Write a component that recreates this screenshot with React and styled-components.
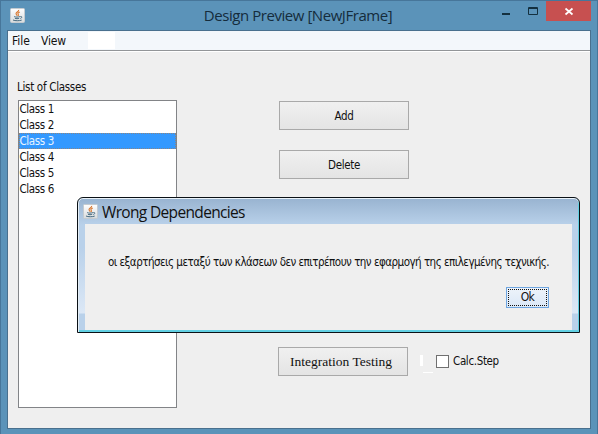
import React from 'react';
import styled, { createGlobalStyle } from 'styled-components';

const GlobalStyle = createGlobalStyle`
  * { box-sizing: border-box; }
  body { margin: 0; background: #5b93b9; overflow: hidden; }
  button { margin: 0; padding: 0; }
`;

const uiFont = "'DejaVu Sans Condensed', 'DejaVu Sans', sans-serif";
const titleFont = "'Open Sans', 'Noto Sans', sans-serif";

const Frame = styled.div`
  position: relative;
  width: 598px;
  height: 434px;
  padding: 0 6px 5px 6px;
  display: flex;
  flex-direction: column;
  background: #5b93b9;
  border: 1px solid #47769a;
  border-bottom: 0;
  font: 11.5px/16px ${uiFont};
  color: #111;
`;

const TitleBar = styled.header`
  flex: 0 0 29px;
  display: grid;
  grid-template-columns: 178px 1fr 182px;
  padding-left: 2px;
`;

const TitleIcon = styled.div`
  padding: 7px 0 0 1px;
  height: 22px;
  line-height: 0;
`;

const Title = styled.h1`
  margin: 0;
  padding: 1px 0 0 0;
  font: 15px/27px ${titleFont};
  letter-spacing: -0.45px;
  color: #152c3c;
  white-space: nowrap;
  text-align: center;
`;

const Controls = styled.div`
  display: flex;
  justify-content: flex-end;
  height: 20px;
`;

const Control = styled.button`
  width: ${(p) => p.$width}px;
  height: 20px;
  border: 0;
  display: flex;
  background: ${(p) => (p.$danger ? '#c75050' : 'transparent')};
`;

const Client = styled.main`
  flex: 1;
  display: flex;
  flex-direction: column;
  min-height: 0;
  border: 1px solid #49708e;
  background: #efefef;
`;

const MenuBar = styled.nav`
  flex: 0 0 20px;
  min-height: 0;
  display: flex;
  background: #f3f7fb;
  border-bottom: 1px solid #929598;
  box-shadow: 0 1px 0 #fff;
  padding: 1px 0 0 4px;
`;

const MenuItem = styled.span`
  width: ${(p) => p.$width}px;
  font: 12px/19px ${uiFont};
  letter-spacing: ${(p) => p.$spacing || 0}px;
`;

const MenuPatch = styled.span`
  width: 27px;
  height: 17px;
  background: #fff;
`;

const Content = styled.div`
  flex: 1;
  display: flex;
  padding: 28px 0 0 10px;
`;

const ListColumn = styled.section`
  width: 260px;
`;

const Label = styled.div`
  height: 21px;
  margin-left: -1px;
  line-height: 17px;
  letter-spacing: -0.3px;
`;

const ListBox = styled.ul`
  list-style: none;
  margin: 0;
  padding: 0;
  width: 159px;
  height: 308px;
  border: 1px solid #828487;
  background: #fff;
`;

const ListItem = styled.li`
  height: 16px;
  padding-left: 0.5px;
  line-height: 17px;
  letter-spacing: -0.38px;
  color: ${(p) => (p.$selected ? '#e8f4ff' : '#111')};
  background: ${(p) => (p.$selected ? '#3399ff' : 'transparent')};
  outline: ${(p) => (p.$selected ? '1px dotted #8a8584' : 'none')};
  outline-offset: -1px;
`;

const Actions = styled.section`
  display: flex;
  flex-direction: column;
  padding-top: 22px;
`;

const Button = styled.button`
  width: 130px;
  height: 29px;
  margin-left: 1px;
  margin-bottom: 20px;
  border: 1px solid #a9a9a9;
  background: linear-gradient(#f0f0f0, #e4e4e4);
  font: 11.5px/26px ${uiFont};
  letter-spacing: -0.35px;
  color: #111;
`;

const BottomRow = styled.div`
  display: flex;
  margin-top: 148px;
`;

const TestingButton = styled(Button)`
  margin-left: 0;
  padding-right: 4px;
  font: 13.5px/27px 'Liberation Serif', serif;
  letter-spacing: 0;
`;

const Marks = styled.svg`
  width: 28px;
  height: 29px;
`;

const CheckLabel = styled.label`
  display: flex;
  gap: 4px;
  height: 13px;
  margin-top: 8px;
  line-height: 13px;
  letter-spacing: -0.35px;
`;

const CheckBox = styled.span`
  width: 13px;
  height: 13px;
  border: 1px solid #707070;
  background: #fff;
`;

const Dialog = styled.div`
  position: absolute;
  left: 76px;
  top: 196px;
  width: 503px;
  height: 136px;
  display: flex;
  flex-direction: column;
  border: 1px solid #0b1116;
  border-radius: 6px 6px 0 0;
  background: linear-gradient(#98b3d0 0, #b9d1ea 27px, #b9d1ea 50px, #dce8f6 115px, #b9d1ea 116px);
  box-shadow: inset 0 1px 0 #eaf3fa, inset 1px 0 0 #e4eef6, inset -1px -2px 0 #62d0e3;
`;

const DialogTitle = styled.header`
  flex: 0 0 26px;
  display: flex;
  align-items: flex-start;
  gap: 4px;
  padding: 6px 0 0 5px;
`;

const DialogName = styled.h2`
  margin: -3px 0 0;
  font: 15.5px/23px ${titleFont};
  letter-spacing: -0.66px;
  color: #111;
`;

const DialogBody = styled.div`
  flex: 1;
  display: flex;
  flex-direction: column;
  align-items: flex-end;
  margin: 0 7px 2px;
  padding: 30px 23px 0 0;
  background: #efefef;
`;

const Message = styled.p`
  margin: 0;
  width: 441px;
  height: 33px;
  white-space: nowrap;
  line-height: 16px;
  letter-spacing: -0.52px;
`;

const OkButton = styled.button`
  width: 43px;
  height: 21px;
  border: 1px solid #6ea5df;
  background: linear-gradient(#edf3fa, #dbe8f7);
  outline: 1px dotted #111;
  outline-offset: -3px;
  font: 12px/17px ${uiFont};
  letter-spacing: -0.5px;
  color: #111;
`;

function JavaIcon() {
  return (
    <svg width="15" height="15" viewBox="0 0 15 15" fill="none">
      <defs>
        <linearGradient id="tile" x2="0" y2="1">
          <stop stopColor="#fff" />
          <stop offset="1" stopColor="#d8dbdd" />
        </linearGradient>
      </defs>
      <rect x=".5" y=".5" width="14" height="14" rx="1" fill="url(#tile)" stroke="#c5cbd0" />
      <path d="M8.7 1.8C9 3.8 5.7 4.2 6 5.8c.1.8 1 1.2 1 2M9.8 4.1C7.8 4.9 7.5 5.8 8.3 6.6c.4.5 0 1-.5 1.3" stroke="#d9772e" strokeWidth="1.1" />
      <path d="M4.2 8.6c1.4.7 4.1.6 5.7 0M4.9 10.3c1.3.5 3 .5 4.3 0M3 12c2 1 6.5.9 8.7.1M10.3 8.6c2-.5 2 1.2.1 1.9" stroke="#456a80" strokeWidth="1" />
    </svg>
  );
}

const classes = ['Class 1', 'Class 2', 'Class 3', 'Class 4', 'Class 5', 'Class 6'];

export default function App() {
  return (
    <>
      <GlobalStyle />
      <Frame>
        <TitleBar>
          <TitleIcon><JavaIcon /></TitleIcon>
          <Title>Design Preview [NewJFrame]</Title>
          <Controls>
            <Control $width={27} aria-label="Minimize">
              <svg width="27" height="20"><path d="M10 12h8v2h-8z" fill="#14303f" /></svg>
            </Control>
            <Control $width={27} aria-label="Maximize">
              <svg width="27" height="20" fill="none"><path d="M9.5 6.5h9v7h-9zM9 7.5h10" stroke="#14303f" /></svg>
            </Control>
            <Control $width={45} $danger aria-label="Close">
              <svg width="45" height="20"><path d="M19.5 7.5l7 6M26.5 7.5l-7 6" stroke="#fff" strokeWidth="1.7" /></svg>
            </Control>
          </Controls>
        </TitleBar>
        <Client>
          <MenuBar>
            <MenuItem $width={29}>File</MenuItem>
            <MenuItem $width={47} $spacing={-0.15}>View</MenuItem>
            <MenuPatch />
          </MenuBar>
          <Content>
            <ListColumn>
              <Label>List of Classes</Label>
              <ListBox>
                {classes.map((name, i) => (
                  <ListItem key={name} $selected={i === 2}>{name}</ListItem>
                ))}
              </ListBox>
            </ListColumn>
            <Actions>
              <Button>Add</Button>
              <Button>Delete</Button>
              <BottomRow>
                <TestingButton>Integration Testing</TestingButton>
                <Marks><path d="M12 8h3v11h-3zM15 25h10v1H15z" fill="#fff" /></Marks>
                <CheckLabel><CheckBox />Calc.Step</CheckLabel>
              </BottomRow>
            </Actions>
          </Content>
        </Client>
        <Dialog role="dialog">
          <DialogTitle>
            <JavaIcon />
            <DialogName>Wrong Dependencies</DialogName>
          </DialogTitle>
          <DialogBody>
            <Message>οι εξαρτήσεις μεταξύ των κλάσεων δεν επιτρέπουν την εφαρμογή της επιλεγμένης τεχνικής.</Message>
            <OkButton>Ok</OkButton>
          </DialogBody>
        </Dialog>
      </Frame>
    </>
  );
}
